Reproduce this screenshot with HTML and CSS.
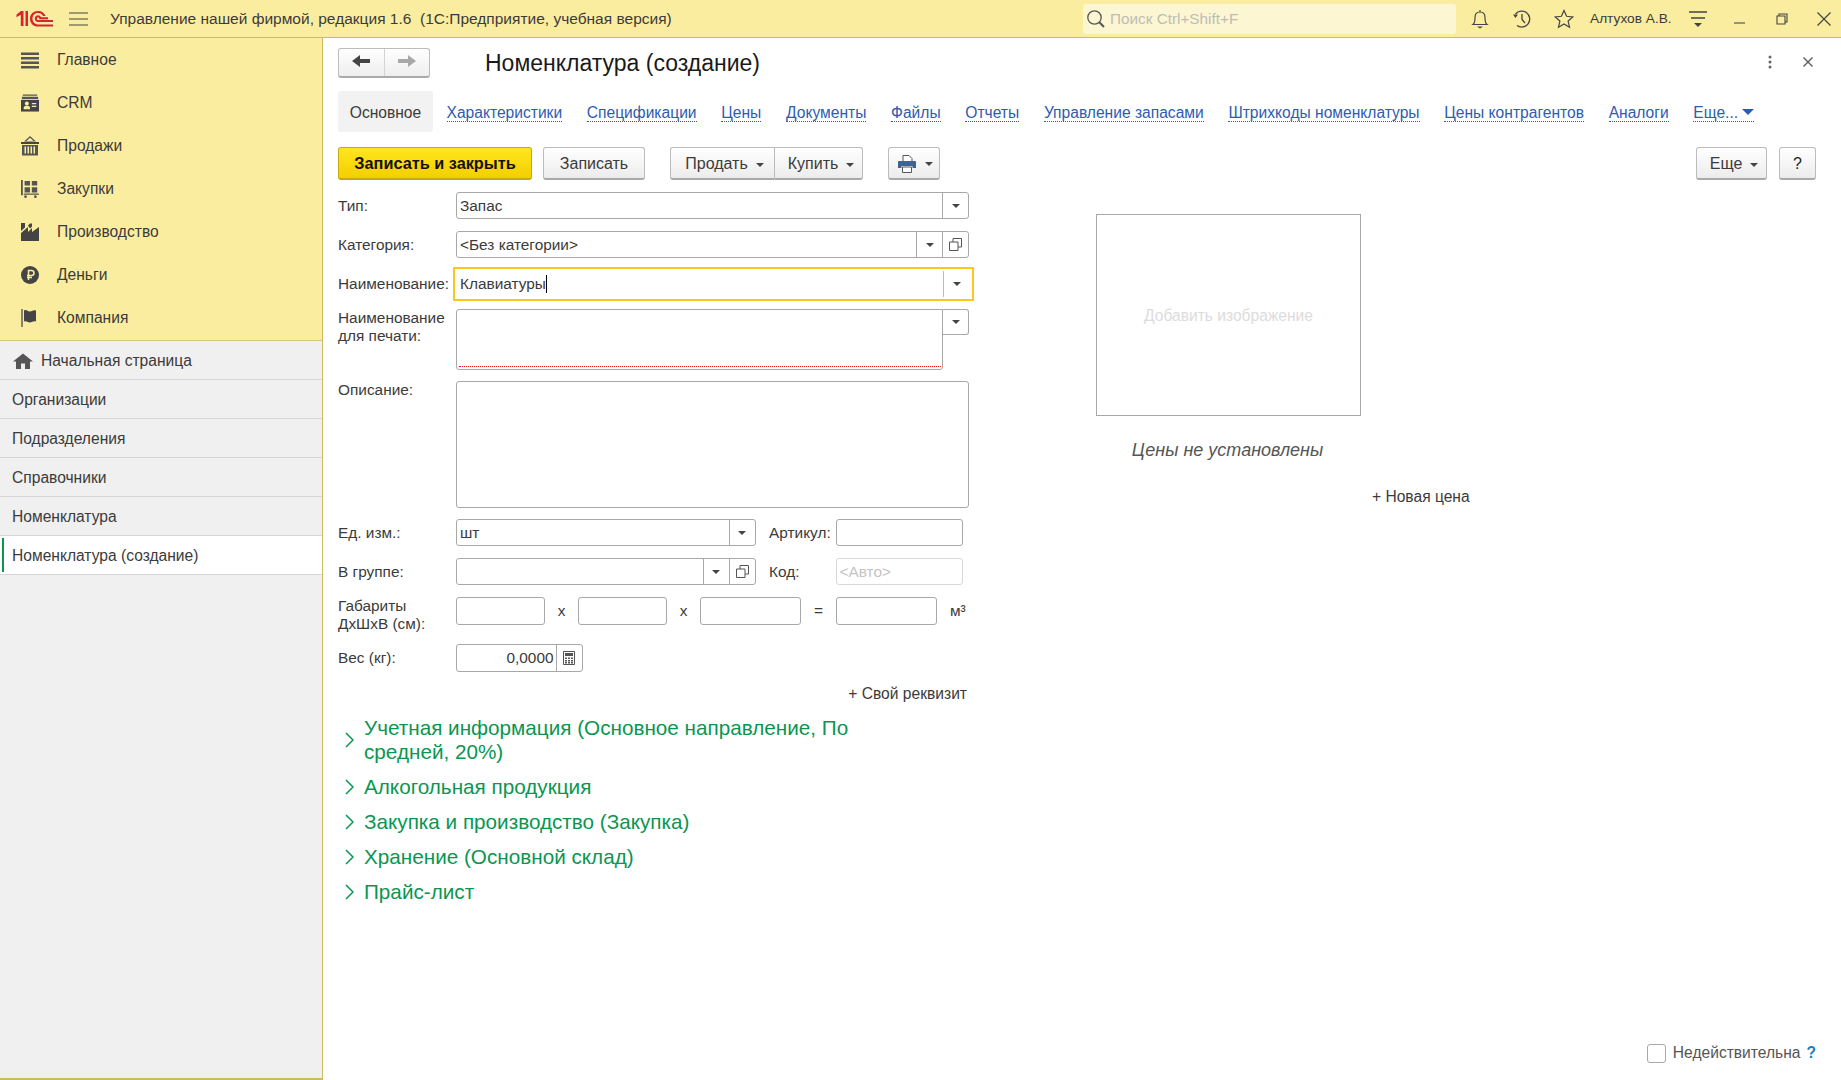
FILE: index.html
```html
<!DOCTYPE html>
<html lang="ru">
<head>
  <meta charset="UTF-8">
  <meta name="viewport" content="width=device-width, initial-scale=1.0">
  <title>Номенклатура (создание)</title>
  <link rel="stylesheet" href="styles.css">
</head>
<body>
  <header class="topbar">
    <svg class="logo" viewBox="0 0 37 18" width="37" height="18">
      <path d="M0.500 4.500 L5 1 H7.500 V16 H4.800 V4.800 L0.500 7.300Z" fill="#d9232e"/>
      <path d="M9.500 1 H12 V16 H9.500Z" fill="#d9232e"/>
      <path d="M37 16.500 H22 C17 16.500 14 13 14 8.700 C14 4 17.500 1 22 1 C26 1 28.500 3 29.500 6 H27 C26 4 24.500 3 22 3 C18.500 3 16.500 5.500 16.500 8.700 C16.500 12 19 14.400 22 14.400 H37Z" fill="#d9232e"/>
      <path d="M37 12 H22 C20 12 18.800 10.500 18.800 8.700 C18.800 6.800 20.200 5.300 22 5.300 C23.500 5.300 24.500 6 25 7.300 H32 V9.300 H23.500 C23.200 8 22.800 7.500 22 7.500 C21.300 7.500 20.900 8 20.900 8.700 C20.900 9.400 21.300 10 22 10 H37Z" fill="#d9232e"/>
    </svg>
    <svg class="burger" viewBox="0 0 19 14" width="19" height="14"><path d="M0 1H19M0 7H19M0 13H19" stroke="#444" stroke-width="1.2"/></svg>
    <span class="app-title">Управление нашей фирмой, редакция 1.6&nbsp; (1С:Предприятие, учебная версия)</span>
    <div class="search">
      <svg viewBox="0 0 20 20" width="20" height="20"><circle cx="8.500" cy="8.500" r="6.700" fill="none" stroke="#555" stroke-width="1.300"/><path d="M13.300 13.300 L18 18" stroke="#555" stroke-width="2"/></svg>
      <span>Поиск Ctrl+Shift+F</span>
    </div>
    <svg class="tb-ic bell" viewBox="0 0 20 20" width="20" height="20"><path d="M3 15.500 C5 14 5 11 5 8.500 C5 5 7 3 10 3 C13 3 15 5 15 8.500 C15 11 15 14 17 15.500Z M10 1V3" fill="none" stroke="#444" stroke-width="1.200"/><path d="M7 17.500H13L10 19.500Z" fill="#444"/></svg>
    <svg class="tb-ic clock" viewBox="0 0 20 20" width="20" height="20"><path d="M3.500 5 A8 8 0 1 1 5 16.500" fill="none" stroke="#444" stroke-width="1.300"/><path d="M1 5.500 H6 L3.500 9Z" fill="#444"/><path d="M10 5 V10.500 L13 14" fill="none" stroke="#444" stroke-width="1.300"/></svg>
    <svg class="tb-ic star" viewBox="0 0 20 20" width="20" height="20"><path d="M10 1.500 L12.600 7.300 L18.800 7.900 L14.100 12 L15.500 18.200 L10 15 L4.500 18.200 L5.900 12 L1.200 7.900 L7.400 7.300Z" fill="none" stroke="#444" stroke-width="1.200"/></svg>
    <span class="user">Алтухов А.В.</span>
    <svg class="tb-menu" viewBox="0 0 18 18" width="18" height="18"><path d="M0 2H18M2 8H16" stroke="#444" stroke-width="1.300"/><path d="M5 13H13L9 17Z" fill="#444"/></svg>
    <svg class="tb-min" viewBox="0 0 11 11" width="11" height="11"><path d="M0 10H11" stroke="#555" stroke-width="1.200"/></svg>
    <svg class="tb-max" viewBox="0 0 12 12" width="12" height="12"><path d="M3 3V1H11V9H9M1 3H9V11H1Z" fill="none" stroke="#444" stroke-width="1.100"/></svg>
    <svg class="tb-close" viewBox="0 0 14 14" width="14" height="14"><path d="M0.500 0.500L13.500 13.500M13.500 0.500L0.500 13.500" stroke="#444" stroke-width="1.200"/></svg>
  </header>

  <div class="app">
    <aside class="sidebar">
      <nav class="sections">
        <a class="section">
          <svg viewBox="0 0 18 18" width="18" height="18"><path d="M0 1.500H18V4H0ZM0 6H18V8.500H0ZM0 10.500H18V13H0ZM0 15H18V17.500H0Z" fill="#555"/></svg>
          Главное
        </a>
        <a class="section">
          <svg viewBox="0 0 20 20" width="18" height="20"><path d="M2 0.500H18V2H2ZM1 3H19V5.500H1Z" fill="#555"/><path d="M0 6.500H20V19.500H0Z" fill="#444"/><circle cx="6.500" cy="10.500" r="2.200" fill="#fbeda0"/><path d="M3 17V15C3 13.500 5 13 6.500 13C8 13 10 13.500 10 15V17ZM12 10H17V11.500H12ZM12 13H17V14.500H12Z" fill="#fbeda0"/></svg>
          CRM
        </a>
        <a class="section">
          <svg viewBox="0 0 18 20" width="18" height="20"><path d="M9 0L15 5.500H3Z M9 1.800L5.500 5H12.500Z" fill="#555" fill-rule="evenodd"/><path d="M0 6H18V8H0Z" fill="#444"/><path d="M1 9H17V19.500H1ZM3.500 10.500V17.500H5V10.500ZM6.500 10.500V17.500H8V10.500ZM9.500 10.500V17.500H11V10.500ZM12.500 10.500V17.500H14V10.500Z" fill="#555" fill-rule="evenodd"/></svg>
          Продажи
        </a>
        <a class="section">
          <svg viewBox="0 0 20 20" width="20" height="20"><path d="M0 0H2V17H0Z M3 15H20V16.500H3Z" fill="#555"/><path d="M4 1H10V6H4ZM12 1H18V6H12ZM4 8H10V14H4ZM12 8H18V14H12Z" fill="#555"/><circle cx="5" cy="18.500" r="1.500" fill="#555"/><circle cx="16" cy="18.500" r="1.500" fill="#555"/></svg>
          Закупки
        </a>
        <a class="section">
          <svg viewBox="0 0 18 18" width="18" height="18"><path d="M0 18V10L7 4V9L11 5V9L18 4V18Z M0 8V0H4V4.500Z M7 2.500L9 0.500H11V3.500L9 5.500Z" fill="#444"/></svg>
          Производство
        </a>
        <a class="section">
          <svg viewBox="0 0 18 18" width="18" height="18"><circle cx="9" cy="9" r="9" fill="#444"/><path d="M7.500 14V4.500H10.500C12 4.500 13 5.500 13 7C13 8.500 12 9.500 10.500 9.500H6M6 11.500H11" fill="none" stroke="#fbeda0" stroke-width="1.500"/></svg>
          Деньги
        </a>
        <a class="section">
          <svg viewBox="0 0 18 18" width="18" height="18"><path d="M1 0V18" stroke="#555" stroke-width="1.400"/><path d="M3 1.500C5.500 0 7 3 9 2.500C11 2 13 0.500 15 1.500V12.500C13 11.500 11 13 9 13.500C7 13.500 5.500 11.500 3 12.500Z" fill="#444"/></svg>
          Компания
        </a>
      </nav>
      <ul class="open-list">
        <li class="open-item home">
          <svg viewBox="0 0 20 16" width="20" height="16"><path d="M10 0.500L20 8.500H17V16H12V10.500H8V16H3V8.500H0Z" fill="#555"/></svg>
          Начальная страница
        </li>
        <li class="open-item">Организации</li>
        <li class="open-item">Подразделения</li>
        <li class="open-item">Справочники</li>
        <li class="open-item">Номенклатура</li>
        <li class="open-item current">Номенклатура (создание)</li>
      </ul>
    </aside>

    <main class="main">
      <div class="title-row">
        <div class="nav-btns">
          <button class="nav-btn">
            <svg viewBox="0 0 18 14" width="18" height="14"><path d="M0 7L8 1V5H18V9H8V13Z" fill="#444"/></svg>
          </button>
          <button class="nav-btn">
            <svg viewBox="0 0 18 14" width="18" height="14"><path d="M18 7L10 1V5H0V9H10V13Z" fill="#a8a8a8"/></svg>
          </button>
        </div>
        <h1 class="page-title">Номенклатура (создание)</h1>
        <svg class="more-dots" viewBox="0 0 4 14" width="4" height="14"><circle cx="2" cy="2" r="1.500" fill="#666"/><circle cx="2" cy="7" r="1.500" fill="#666"/><circle cx="2" cy="12" r="1.500" fill="#666"/></svg>
        <svg class="form-close" viewBox="0 0 10 10" width="10" height="10"><path d="M0.500 0.500L9.500 9.500M9.500 0.500L0.500 9.500" stroke="#555" stroke-width="1.300"/></svg>
      </div>

      <div class="tabs">
        <span class="tab-active">Основное</span>
        <a class="tab first">Характеристики</a>
        <a class="tab">Спецификации</a>
        <a class="tab">Цены</a>
        <a class="tab">Документы</a>
        <a class="tab">Файлы</a>
        <a class="tab">Отчеты</a>
        <a class="tab">Управление запасами</a>
        <a class="tab">Штрихкоды номенклатуры</a>
        <a class="tab">Цены контрагентов</a>
        <a class="tab">Аналоги</a>
        <a class="tab">Еще...<i class="tab-caret"></i></a>
      </div>

      <div class="toolbar">
        <button class="btn primary">Записать и закрыть</button>
        <button class="btn save">Записать</button>
        <div class="btn-group">
          <button class="btn sell">Продать<i class="caret"></i></button>
          <button class="btn buy">Купить<i class="caret"></i></button>
        </div>
        <button class="btn print">
          <svg viewBox="0 0 18 18" width="18" height="18"><path d="M5 0.500H11L14 3.500V7H5Z" fill="#fff" stroke="#555"/><path d="M1 6H17C17.500 6 18 6.500 18 7V13H14.500V11H3.500V13H0V7C0 6.500 0.500 6 1 6Z" fill="#3d6594"/><path d="M4.500 12H13.500V17.500H4.500Z" fill="#fff" stroke="#555"/></svg>
          <i class="caret"></i>
        </button>
        <button class="btn more">Еще<i class="caret"></i></button>
        <button class="btn help">?</button>
      </div>

      <div class="content">
        <form class="form-col">
          <div class="row">
            <label class="lbl">Тип:</label>
            <div class="field grow"><span class="val">Запас</span><span class="fbtn"><i class="caret"></i></span></div>
          </div>
          <div class="row">
            <label class="lbl">Категория:</label>
            <div class="field grow"><span class="val">&lt;Без категории&gt;</span><span class="fbtn"><i class="caret"></i></span><span class="fbtn"><svg class="clone" viewBox="0 0 13 13" width="13" height="13"><path d="M4 4V0.500H12.500V9H9M0.500 4H9V12.500H0.500Z" fill="none" stroke="#555"/></svg></span></div>
          </div>
          <div class="row name-row">
            <label class="lbl">Наименование:</label>
            <div class="field grow focused"><span class="val">Клавиатуры<i class="cursor"></i></span><span class="fbtn"><i class="caret"></i></span></div>
          </div>
          <div class="row top tight">
            <label class="lbl two-line">Наименование для печати:</label>
            <div class="field memo grow"><span class="spell"></span></div>
            <span class="memo-btn"><i class="caret"></i></span>
          </div>
          <div class="row top tight">
            <label class="lbl">Описание:</label>
            <div class="field desc grow"></div>
          </div>
          <div class="row">
            <label class="lbl">Ед. изм.:</label>
            <div class="field w-unit"><span class="val">шт</span><span class="fbtn"><i class="caret"></i></span></div>
            <label class="lbl-sm">Артикул:</label>
            <div class="field w-art"></div>
          </div>
          <div class="row">
            <label class="lbl">В группе:</label>
            <div class="field w-unit"><span class="val"></span><span class="fbtn"><i class="caret"></i></span><span class="fbtn"><svg class="clone" viewBox="0 0 13 13" width="13" height="13"><path d="M4 4V0.500H12.500V9H9M0.500 4H9V12.500H0.500Z" fill="none" stroke="#555"/></svg></span></div>
            <label class="lbl-sm">Код:</label>
            <div class="field w-art disabled"><span class="val">&lt;Авто&gt;</span></div>
          </div>
          <div class="row top dims">
            <label class="lbl two-line">Габариты ДхШхВ (см):</label>
            <div class="field w-d1"></div>
            <span class="dim-x">х</span>
            <div class="field w-d1"></div>
            <span class="dim-x">х</span>
            <div class="field w-d3"></div>
            <span class="dim-x eq">=</span>
            <div class="field w-d3"></div>
            <span class="dim-unit">м³</span>
          </div>
          <div class="row weight">
            <label class="lbl">Вес (кг):</label>
            <div class="field w-weight"><span class="val num">0,0000</span><span class="fbtn"><svg viewBox="0 0 12 14" width="12" height="14"><path d="M0.500 0.500H11.500V13.500H0.500Z" fill="none" stroke="#555"/><path d="M2 2H10V5H2ZM2 6.500H4V8H2ZM5 6.500H7V8H5ZM8 6.500H10V8H8ZM2 9H4V10.500H2ZM5 9H7V10.500H5ZM8 9H10V10.500H8ZM2 11H4V12.500H2ZM5 11H7V12.500H5ZM8 11H10V12.500H8Z" fill="#555"/></svg></span></div>
          </div>
          <div class="own-attr">+ Свой реквизит</div>

          <div class="groups">
            <div class="group">
              <svg viewBox="0 0 9 16" width="9" height="16"><path d="M1 1L8 8L1 15" fill="none" stroke="#0a9650" stroke-width="1.500"/></svg>
              <span class="group-text">Учетная информация (Основное направление, По средней, 20%)</span>
            </div>
            <div class="group">
              <svg viewBox="0 0 9 16" width="9" height="16"><path d="M1 1L8 8L1 15" fill="none" stroke="#0a9650" stroke-width="1.500"/></svg>
              <span class="group-text">Алкогольная продукция</span>
            </div>
            <div class="group">
              <svg viewBox="0 0 9 16" width="9" height="16"><path d="M1 1L8 8L1 15" fill="none" stroke="#0a9650" stroke-width="1.500"/></svg>
              <span class="group-text">Закупка и производство (Закупка)</span>
            </div>
            <div class="group">
              <svg viewBox="0 0 9 16" width="9" height="16"><path d="M1 1L8 8L1 15" fill="none" stroke="#0a9650" stroke-width="1.500"/></svg>
              <span class="group-text">Хранение (Основной склад)</span>
            </div>
            <div class="group">
              <svg viewBox="0 0 9 16" width="9" height="16"><path d="M1 1L8 8L1 15" fill="none" stroke="#0a9650" stroke-width="1.500"/></svg>
              <span class="group-text">Прайс-лист</span>
            </div>
          </div>
        </form>

        <section class="side-col">
          <div class="img-box">Добавить изображение</div>
          <div class="no-price">Цены не установлены</div>
          <div class="new-price">+ Новая цена</div>
        </section>
      </div>

      <footer class="foot">
        <span class="check"></span>
        <span class="check-text">Недействительна</span>
        <span class="foot-help">?</span>
      </footer>
    </main>
  </div>
</body>
</html>
```

FILE: styles.css
```css
* {
  box-sizing: border-box;
}
html, body {
  margin: 0;
  height: 1080px;
  overflow: hidden;
}
body {
  font-family: "Liberation Sans", Arial, sans-serif;
  font-size: 15.6px;
  color: #3b3b3b;
  background: #fff;
}
button {
  font: inherit;
}

/* top bar */
.topbar {
  display: flex;
  align-items: center;
  height: 38px;
  background: #fbeda0;
  border-bottom: 1px solid #cbbc62;
}
.logo {
  margin-left: 16px;
}
.burger {
  margin-left: 16px;
}
.app-title {
  margin-left: 22px;
  width: 973px;
  font-size: 15.500px;
  white-space: nowrap;
}
.search {
  display: flex;
  align-items: center;
  gap: 4px;
  width: 373px;
  height: 30px;
  padding-left: 3px;
  background: #fdf6d2;
  border-radius: 3px;
  color: #bdbdb5;
  font-size: 15.3px;
}
.tb-ic {
  flex: none;
}
.bell {
  margin-left: 14px;
}
.clock {
  margin-left: 22px;
}
.star {
  margin-left: 22px;
}
.user {
  margin-left: 16px;
  font-size: 13.7px;
  white-space: nowrap;
}
.tb-menu {
  margin-left: 17px;
}
.tb-min {
  margin-left: 27px;
}
.tb-max {
  margin-left: 31px;
}
.tb-close {
  margin-left: 29px;
}

/* left side */
.app {
  display: flex;
  height: 1042px;
}
.sidebar {
  width: 323px;
  flex: none;
  background: #f0f0f0;
  border-right: 1px solid #cbbc62;
  border-bottom: 2px solid #cbbc62;
}
.sections {
  height: 303px;
  background: #fbeda0;
  border-bottom: 1px solid #d3c67e;
}
.section {
  display: flex;
  align-items: center;
  height: 43px;
  padding: 1px 0 0 21px;
}
.section svg {
  width: 18px;
  margin-right: 18px;
}
.open-list {
  list-style: none;
  margin: 0;
  padding: 0;
}
.open-item {
  display: flex;
  align-items: center;
  height: 39px;
  padding: 1px 0 0 12px;
  border-bottom: 1px solid #d6d6d6;
}
.open-item.home svg {
  margin: 0 8px 0 1px;
}
.open-item.current {
  position: relative;
  background: #fff;
}
.open-item.current::before {
  content: "";
  position: absolute;
  left: 2px;
  top: 2px;
  bottom: 2px;
  width: 2px;
  background: #0a9650;
}

/* main */
.main {
  flex: 1;
  display: flex;
  flex-direction: column;
  padding: 10px 25px 17px 15px;
}
.title-row {
  display: flex;
  align-items: center;
  height: 30px;
}
.nav-btns {
  display: flex;
  width: 92px;
  height: 30px;
  border: 1px solid #bcbcbc;
  border-bottom: 2px solid #aaa;
  border-radius: 3px;
  background: linear-gradient(#fff, #eee);
}
.nav-btn {
  flex: 1;
  padding: 0;
  border: 0;
  background: none;
}
.nav-btn + .nav-btn {
  border-left: 1px solid #d4d4d4;
}
.page-title {
  margin: 1px 0 0 55px;
  font-size: 23px;
  font-weight: normal;
  color: #1a1a1a;
}
.more-dots {
  margin-left: auto;
  margin-top: -2px;
}
.form-close {
  margin: -2px 3px 0 31px;
}

.tabs {
  display: flex;
  align-items: center;
  height: 41px;
  margin-top: 13px;
}
.tab-active {
  display: flex;
  align-items: center;
  justify-content: center;
  width: 95px;
  height: 41px;
  padding-top: 3px;
  background: #f2f2f2;
  border-radius: 3px;
}
.tab {
  margin: 3px 0 0 24.700px;
  color: #2f5bb0;
  line-height: 16px;
  border-bottom: 1px dotted #2f5bb0;
  white-space: nowrap;
}
.tab.first {
  margin-left: 13.500px;
}
.tab-caret {
  display: inline-block;
  margin-left: 4px;
  vertical-align: 3px;
  border-left: 6px solid transparent;
  border-right: 6px solid transparent;
  border-top: 6px solid #2f5bb0;
}

.toolbar {
  display: flex;
  height: 33px;
  margin-top: 15px;
}
.btn {
  height: 33px;
  padding: 1px 0 0;
  border: 1px solid #bcbcbc;
  border-bottom: 2px solid #a9a9a9;
  border-radius: 3px;
  background: linear-gradient(#fff, #ececec);
  color: #3b3b3b;
  font-size: 16px;
}
.btn.primary {
  width: 194px;
  font-size: 16.300px;
  font-weight: bold;
  color: #111;
  background: linear-gradient(#ffe61e, #f3cf00);
  border-color: #c8aa10;
}
.btn.save {
  width: 102px;
  margin-left: 11px;
}
.btn-group {
  display: flex;
  margin-left: 25px;
}
.btn.sell {
  width: 104px;
  padding-left: 4px;
  border-radius: 3px 0 0 3px;
  border-right: 0;
}
.btn.buy {
  width: 89px;
  padding-left: 5px;
  border-radius: 0 3px 3px 0;
}
.btn.print {
  display: flex;
  align-items: center;
  width: 52px;
  margin-left: 25px;
  padding-left: 9px;
}
.btn.more {
  width: 71px;
  margin-left: auto;
  padding-left: 5px;
}
.btn.help {
  width: 37px;
  margin-left: 12px;
  color: #222;
}
.caret {
  display: inline-block;
  border-left: 4px solid transparent;
  border-right: 4px solid transparent;
  border-top: 4px solid #444;
  vertical-align: 2px;
}
.btn .caret {
  margin-left: 8px;
}
.btn.print .caret {
  margin-left: 9px;
}

/* form */
.content {
  flex: 1;
  display: flex;
  margin-top: 12px;
}
.form-col {
  width: 631px;
  flex: none;
  font-size: 15.400px;
}
.row {
  display: flex;
  align-items: center;
  margin-bottom: 12px;
}
.row.top {
  align-items: flex-start;
}
.row.tight {
  margin-bottom: 11px;
}
.lbl {
  width: 118px;
  flex: none;
  white-space: nowrap;
}
.lbl.two-line {
  padding-right: 20px;
  line-height: 18px;
  white-space: normal;
}
.field {
  display: flex;
  align-items: center;
  height: 27px;
  background: #fff;
  border: 1px solid #a8a8a8;
  border-radius: 3px;
}
.grow {
  flex: 1;
}
.val {
  flex: 1;
  padding-left: 3px;
  white-space: nowrap;
}
.num {
  padding-right: 2px;
  text-align: right;
}
.fbtn {
  display: flex;
  align-items: center;
  justify-content: center;
  width: 26px;
  height: 100%;
  flex: none;
  border-left: 1px solid #a8a8a8;
}
.clone {
  display: block;
}
.name-row {
  margin-bottom: 11px;
}
.focused {
  height: 28px;
  margin-right: -2px;
  border: 0;
  border-radius: 0;
  outline: 2px solid #fcc81f;
  outline-offset: 1px;
}
.focused .val {
  padding-left: 4px;
}
.focused .fbtn {
  height: 26px;
  margin-right: 2px;
  border-left-color: #bbb;
}
.cursor {
  display: inline-block;
  width: 1px;
  height: 18px;
  margin-bottom: -4px;
  background: #000;
}
.memo {
  position: relative;
  height: 61px;
  border-radius: 3px 0 3px 3px;
}
.spell {
  position: absolute;
  left: 2px;
  right: 1px;
  bottom: 2px;
  border-bottom: 1px dotted #e02020;
}
.memo-btn {
  display: flex;
  align-items: center;
  justify-content: center;
  width: 26px;
  height: 26px;
  flex: none;
  border: 1px solid #a8a8a8;
  border-left: 0;
  border-radius: 0 3px 3px 0;
}
.desc {
  height: 127px;
}
.w-unit {
  width: 299.500px;
}
.lbl-sm {
  width: 66.500px;
  margin-left: 13.500px;
  white-space: nowrap;
}
.w-art {
  width: 127px;
}
.disabled {
  border-color: #d8d8d8;
}
.disabled .val {
  color: #c4c4c4;
}
.dims {
  margin-bottom: 0;
  height: 47px;
}
.w-d1 {
  width: 89px;
  height: 28px;
}
.w-d3 {
  width: 101px;
  height: 28px;
}
.dim-x {
  width: 33px;
  line-height: 28px;
  text-align: center;
}
.dim-x.eq {
  width: 35px;
}
.dim-unit {
  margin-left: 13px;
  line-height: 28px;
}
.w-weight {
  width: 126.500px;
  height: 28px;
}
.weight {
  margin-bottom: 0;
}
.own-attr {
  margin-top: 13px;
  padding-right: 2px;
  font-size: 15.600px;
  line-height: 18px;
  text-align: right;
}
.groups {
  display: flex;
  flex-direction: column;
  gap: 11px;
  margin-top: 13px;
  font-size: 20.700px;
  line-height: 24px;
  color: #0a9650;
}
.group {
  display: flex;
  align-items: center;
  gap: 10px;
  padding-left: 7px;
}
.group-text {
  width: 490px;
}

/* right side of the form */
.side-col {
  margin-left: 127px;
  padding-top: 22px;
}
.img-box {
  display: flex;
  align-items: center;
  justify-content: center;
  width: 265px;
  height: 202px;
  padding-top: 1px;
  border: 1px solid #a8a8a8;
  color: #dcdcdc;
}
.no-price {
  width: 263px;
  margin-top: 24px;
  line-height: 20px;
  font-style: italic;
  font-size: 18px;
  color: #555;
  text-align: center;
}
.new-price {
  margin: 28px 0 0 276px;
  white-space: nowrap;
}

.foot {
  display: flex;
  align-items: center;
  justify-content: flex-end;
  height: 20px;
}
.check {
  width: 19px;
  height: 19px;
  border: 1px solid #a8a8a8;
  border-radius: 3px;
}
.check-text {
  margin-left: 7px;
  color: #555;
}
.foot-help {
  margin-left: 6px;
  color: #1b7fc4;
  font-weight: bold;
}
```
